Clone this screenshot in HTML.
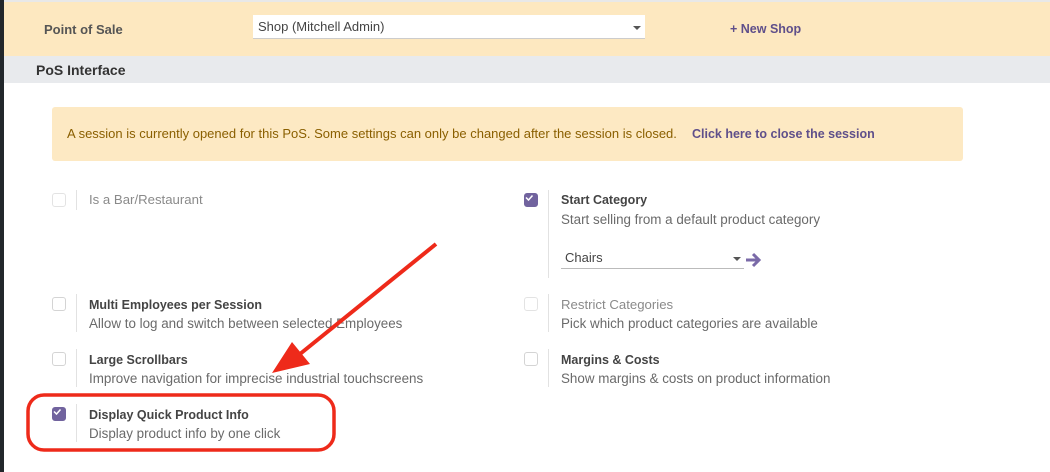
<!DOCTYPE html><html><head><style>
body{margin:0;width:1050px;height:472px;overflow:hidden;background:#fff;font-family:"Liberation Sans",sans-serif;font-size:12.5px;color:#4c4c4c;position:relative}
.a{position:absolute;white-space:nowrap}
.cb{position:absolute;width:12px;height:12px;border:1px solid #d4d4d4;border-radius:3px;background:#fff}
.cb.on{background:#71639e;border-color:#71639e}
.vl{position:absolute;width:1px;background:#e2e2e2}
.t{font-weight:bold;color:#444}
.d{color:#6a6a6a;font-size:13.4px}
.g{color:#8a8a8a;font-size:13.2px}
</style></head><body>
<div class="a" style="left:0;top:0;width:4px;height:472px;background:#22272b"></div>
<div class="a" style="left:4px;top:0;width:1046px;height:2px;background:#e8e8e8"></div>
<div class="a" style="left:4px;top:2px;width:1046px;height:54px;background:#fde8c0"></div>
<div class="a t" style="left:44px;top:22px;font-size:13px;color:#555">Point of Sale</div>
<div class="a" style="left:253px;top:15px;width:392px;height:23px;background:#fff;border-bottom:1px solid #ccc"></div>
<div class="a" style="left:258px;top:19px;font-size:13px;color:#444">Shop (Mitchell Admin)</div>
<div class="a" style="left:633px;top:26px;border-left:4px solid transparent;border-right:4px solid transparent;border-top:4px solid #555"></div>
<div class="a t" style="left:730px;top:22px;color:#5f4f8a">+ New Shop</div>
<div class="a" style="left:4px;top:56px;width:1046px;height:27px;background:#e8eaed"></div>
<div class="a t" style="left:36px;top:62px;font-size:14px;color:#333">PoS Interface</div>
<div class="a" style="left:52px;top:107px;width:911px;height:54px;background:#fde9c3;border-radius:3px"></div>
<div class="a" style="left:67px;top:126px;color:#8a5f00;font-size:13px">A session is currently opened for this PoS. Some settings can only be changed after the session is closed.</div>
<div class="a t" style="left:692px;top:127px;color:#5f4f8a">Click here to close the session</div>

<div class="cb" style="left:52px;top:193px;border-color:#e3e3e3"></div><div class="vl" style="left:76px;top:190px;height:20px"></div>
<div class="a g" style="left:89px;top:192px">Is a Bar/Restaurant</div>

<div class="cb on" style="left:524px;top:193px"></div><div class="vl" style="left:548px;top:190px;height:88px"></div>
<div class="a t" style="left:561px;top:193px">Start Category</div>
<div class="a d" style="left:561px;top:212px">Start selling from a default product category</div>
<div class="a" style="left:565px;top:250px;color:#444;font-size:13px">Chairs</div>
<div class="a" style="left:561px;top:268px;width:183px;height:1px;background:#bbb"></div>
<div class="a" style="left:733px;top:257px;border-left:4px solid transparent;border-right:4px solid transparent;border-top:4px solid #555"></div>
<svg class="a" style="left:745px;top:251px" width="18" height="18" viewBox="0 0 18 18"><path d="M1 9h12M8 3l6 6-6 6" stroke="#7a6aa8" stroke-width="3" fill="none"/></svg>

<div class="cb" style="left:52px;top:297px"></div><div class="vl" style="left:76px;top:294px;height:38px"></div>
<div class="a t" style="left:89px;top:298px">Multi Employees per Session</div>
<div class="a d" style="left:89px;top:316px">Allow to log and switch between selected Employees</div>
<div class="cb" style="left:524px;top:297px;border-color:#e3e3e3"></div><div class="vl" style="left:548px;top:294px;height:38px"></div>
<div class="a g" style="left:561px;top:297px">Restrict Categories</div>
<div class="a d" style="left:561px;top:316px">Pick which product categories are available</div>

<div class="cb" style="left:52px;top:352px"></div><div class="vl" style="left:76px;top:349px;height:38px"></div>
<div class="a t" style="left:89px;top:353px">Large Scrollbars</div>
<div class="a d" style="left:89px;top:371px">Improve navigation for imprecise industrial touchscreens</div>
<div class="cb" style="left:524px;top:352px"></div><div class="vl" style="left:548px;top:349px;height:38px"></div>
<div class="a t" style="left:561px;top:353px">Margins &amp; Costs</div>
<div class="a d" style="left:561px;top:371px">Show margins &amp; costs on product information</div>

<div class="cb on" style="left:52px;top:407px"></div><div class="vl" style="left:76px;top:404px;height:38px"></div>
<div class="a t" style="left:89px;top:408px">Display Quick Product Info</div>
<div class="a d" style="left:89px;top:426px">Display product info by one click</div>

<svg class="a" style="left:0;top:0" width="1050" height="472">
<path d="M54 197.5l2.5 2.5 4-4.5M526 197.5l2.5 2.5 4-4.5M54 411.5l2.5 2.5 4-4.5" stroke="#fff" stroke-width="1.5" fill="none"/>
<rect x="28" y="395" width="306" height="55" rx="16" fill="none" stroke="#ee2a1a" stroke-width="3.5"/>
<line x1="436" y1="244" x2="300" y2="354" stroke="#ee2a1a" stroke-width="4"/>
<polygon points="272,373 292,342 310,364" fill="#ee2a1a"/>
</svg>
</body></html>
